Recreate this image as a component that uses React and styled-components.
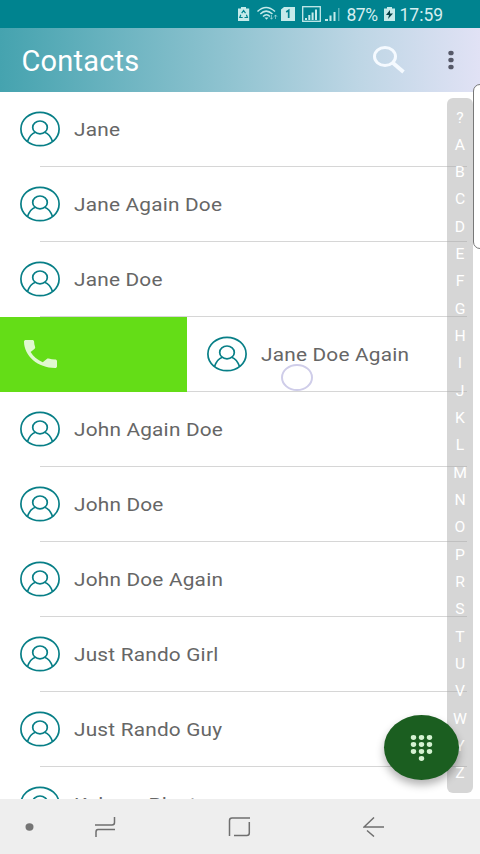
import React from "react";
import styled, { createGlobalStyle } from "styled-components";

const Global = createGlobalStyle`
  * { box-sizing: border-box; }
  body { margin: 0; background: #fff; font-family: Roboto, sans-serif; overflow: hidden; }
  svg { display: block; flex: none; }
`;
const Screen = styled.main`
  position: relative; width: 480px; height: 854px; overflow: hidden;
  display: flex; flex-direction: column; background: #fff;
`;
const StatusBar = styled.header`
  height: 28px; flex: none; background: #00838f; color: #d5eef0;
  display: flex; align-items: center; padding-left: 238px; font-size: 17.5px;
`;
const StatusText = styled.span`
  display: block; width: ${p => p.$width}px; margin-left: ${p => p.$gap}px;
  line-height: 28px; white-space: nowrap; padding-top: 1px;
  letter-spacing: ${p => p.$spacing}px;
`;
const AppBar = styled.section`
  height: 64px; flex: none; display: flex; align-items: center; padding: 0 26px 0 21.5px;
  background: linear-gradient(90deg, #45a3af 0%, #8fc3d0 47%, #bed6e5 75%, #e1e2f5 100%);
`;
const Title = styled.h1`
  margin: 0; flex: 1; color: #fff; font-size: 29px; font-weight: 400; line-height: 62px;
  letter-spacing: 0.2px; padding-top: 2px; white-space: nowrap;
`;
const IconButton = styled.button`
  border: 0; padding: 0; background: none; margin-left: ${p => p.$gap || 0}px;
`;
const List = styled.ul`
  list-style: none; margin: 0; padding: 0; height: 707px; flex: none; overflow: hidden;
`;
const Row = styled.li`
  height: 75px; display: flex; position: relative; background: #fff;
  &::after {
    content: ""; position: absolute; left: ${p => (p.$swiped ? 187 : 40)}px; right: 13px; bottom: 0;
    height: 1px; background: #d6d6d6;
  }
`;
const CallAction = styled.div`
  width: 187px; height: 75px; flex: none; background: #64dd17; padding: 23px 0 0 24px;
`;
const Contact = styled.div`
  display: flex; align-items: center; padding-left: 20px; height: 74px;
`;
const Name = styled.span`
  margin-left: 13.5px; font-size: 18px; letter-spacing: 0.18px; color: #666; white-space: nowrap;
  transform: scaleX(1.155); transform-origin: left center; line-height: 24px; padding-top: 2px;
`;
const IndexBar = styled.nav`
  position: absolute; left: 447px; top: 98px; width: 26px; height: 695px; border-radius: 6px;
  background: rgba(165, 165, 165, 0.46); color: #fff; display: flex; flex-direction: column;
  padding-top: 6.5px;
`;
const Letter = styled.span`
  height: 27.33px; line-height: 27.33px; text-align: center; font-size: 14px;
  transform: scaleX(1.12);
`;
const EdgeHandle = styled.div`
  position: absolute; left: 473px; top: 84px; width: 18px; height: 165px;
  border: 1px solid #777; border-radius: 7px; background: #fff;
`;
const Touch = styled.div`
  position: absolute; left: 281px; top: 364px; width: 32px; height: 27px;
  border: 2px solid #cfcde9; border-radius: 50%; background: rgba(255,255,255,.7);
`;
const DialButton = styled.button`
  position: absolute; left: 384px; top: 715px; width: 75px; height: 65px; border: 0; border-radius: 50%;
  background: #1b5e20; box-shadow: 0 5px 8px rgba(0,0,0,.3); display: flex; align-items: center;
  justify-content: center; padding: 0;
`;
const NavBar = styled.footer`
  height: 55px; flex: none; background: #eeeeee; display: flex; align-items: center;
`;
const NavButton = styled.button`
  border: 0; padding: 0; background: none; margin-left: ${p => p.$gap}px;
`;

const Avatar = () => (
  <svg width="40" height="36" viewBox="0 0 40 36" fill="none" stroke="#087f87" strokeWidth="1.7">
    <ellipse cx="20" cy="18" rx="19.1" ry="16.7" />
    <ellipse cx="20" cy="16.4" rx="7.3" ry="6.4" />
    <path d="M7.5 30.6C9 26 12 22.4 15.3 21.2M24.7 21.2C28 22.4 31 26 32.5 30.6" />
  </svg>
);

const StatusIcons = () => (
  <svg width="104" height="28" viewBox="238 0 104 28" fill="#c5eaea">
    <path d="M241 7h5v1.500h3.200v12.500h-11.200v-12.500h3z" />
    <g fill="none" stroke="#00838f" strokeWidth="1.200">
      <path d="M241.700 13.200l1.900-2.700 1.900 2.700M240.800 14.800l-1 2.700h2.900M246.400 14.800l1 2.700h-2.900" />
    </g>
    <g fill="none" stroke="#c5eaea" strokeWidth="1.500">
      <path d="M257.500 11.500Q266 3.500 275 11.500M260.300 14Q266 8.300 272.500 14M263 16.500Q266.500 12.800 270 16.500" />
      <path d="M271.500 15v4M270 17.500l1.500 1.800 1.500-1.800M275.500 19v-4M274 16.700l1.500-1.800 1.500 1.800" strokeWidth=".9" opacity=".65" />
    </g>
    <path d="M264.500 17.500h4l-2 2.300z" />
    <path d="M284 7h11v14h-14V9.500z" />
    <path d="M286.200 12l2.500-1.700V18" fill="none" stroke="#00838f" strokeWidth="1.700" />
    <rect x="302.700" y="6.700" width="17.600" height="14.600" fill="none" stroke="#c5eaea" strokeWidth="1.300" />
    <path d="M305 18h2v2h-2zM308.300 15h2v5h-2zM311.600 12.500h2V20h-2zM315 9.500h2V20h-2zM325 19h3v2h-3zM329.500 15.500h2V21h-2zM333.500 12h2v9h-2z" />
    <path d="M338 8h1.500v13H338z" opacity=".45" />
  </svg>
);

const names = ["Jane", "Jane Again Doe", "Jane Doe", "Jane Doe Again", "John Again Doe", "John Doe",
  "John Doe Again", "Just Rando Girl", "Just Rando Guy", "Kelvser Plast"];

export default function App() {
  return (
    <Screen>
      <Global />
      <StatusBar>
        <StatusIcons />
        <StatusText $gap={4.5} $width={37.5} $spacing={-0.5}>87%</StatusText>
        <svg width="11" height="16" viewBox="0 0 11 16">
          <path d="M3 1h5v1.500h3V15H0V2.500h3z" fill="#c5eaea" />
          <path d="M6 4L2 9h3l-1 4 5-5.500H6z" fill="#063f45" />
        </svg>
        <StatusText $gap={4.5} $width={45} $spacing={0}>17:59</StatusText>
      </StatusBar>
      <AppBar>
        <Title>Contacts</Title>
        <IconButton>
          <svg width="34" height="30" viewBox="0 0 34 30" fill="none" stroke="#f5faff">
            <ellipse cx="13" cy="11.500" rx="10.500" ry="9" strokeWidth="3" />
            <path d="M21 18L31.500 27" strokeWidth="3.800" />
          </svg>
        </IconButton>
        <IconButton $gap={42}>
          <svg width="6" height="20" viewBox="0 0 6 20" fill="#565968">
            <ellipse cx="3" cy="3" rx="2.700" ry="2.300" /><ellipse cx="3" cy="10" rx="2.700" ry="2.300" /><ellipse cx="3" cy="17" rx="2.700" ry="2.300" />
          </svg>
        </IconButton>
      </AppBar>
      <List>
        {names.map((name, i) => (
          <Row key={name} $swiped={i === 3}>
            {i === 3 && (
              <CallAction>
                <svg width="33" height="28" viewBox="3 3 18 18" preserveAspectRatio="none" fill="#e0f8d0">
                  <path d="M6.620 10.790c1.440 2.830 3.760 5.140 6.590 6.590l2.200-2.200c.27-.27.67-.36 1.020-.24 1.120.37 2.330.57 3.570.57.55 0 1 .45 1 1V20c0 .55-.45 1-1 1C10.610 21 3 13.390 3 4c0-.55.45-1 1-1h3.500c.55 0 1 .45 1 1 0 1.250.2 2.450.57 3.570.11.35.03.74-.25 1.020z" />
                </svg>
              </CallAction>
            )}
            <Contact><Avatar /><Name>{name}</Name></Contact>
          </Row>
        ))}
      </List>
      <NavBar>
        <NavButton $gap={25}><svg width="9" height="8" viewBox="0 0 9 8"><ellipse cx="4.500" cy="4" rx="4" ry="3.700" fill="#757575" /></svg></NavButton>
        <NavButton $gap={60}><svg width="23" height="22" viewBox="0 0 23 22" fill="none" stroke="#6f6f6f" strokeWidth="1.500"><path d="M1 9h17q2.500 0 2.500-2.500V1M21 13.500H4Q2 13.500 2 16v5" /></svg></NavButton>
        <NavButton $gap={111}><svg width="23" height="20" viewBox="0 0 23 20" fill="none" stroke="#6f6f6f" strokeWidth="1.500"><path d="M1.500 19V3.500Q1.500 1 4 1H22M21.300 5v11q0 2.500-2.500 2.500H6" /></svg></NavButton>
        <NavButton $gap={112}><svg width="22" height="20" viewBox="0 0 22 20" fill="none" stroke="#6f6f6f" strokeWidth="1.500"><path d="M11 .5L1 10H21M4 13.500L11 19.500" /></svg></NavButton>
      </NavBar>
      <IndexBar>{[..."?ABCDEFGHIJKLMNOPRSTUVWYZ"].map(c => <Letter key={c}>{c}</Letter>)}</IndexBar>
      <EdgeHandle />
      <Touch />
      <DialButton>
        <svg width="23" height="28" viewBox="0 0 23 28" fill="#d5f2d2">
          {[0, 1, 2, 3].flatMap(r => [0, 1, 2].filter(c => r < 3 || c === 1).map(c => (
            <ellipse key={`${r}-${c}`} cx={3.500 + c * 8} cy={3.500 + r * 7} rx="2.700" ry="2.400" />
          )))}
        </svg>
      </DialButton>
    </Screen>
  );
}
